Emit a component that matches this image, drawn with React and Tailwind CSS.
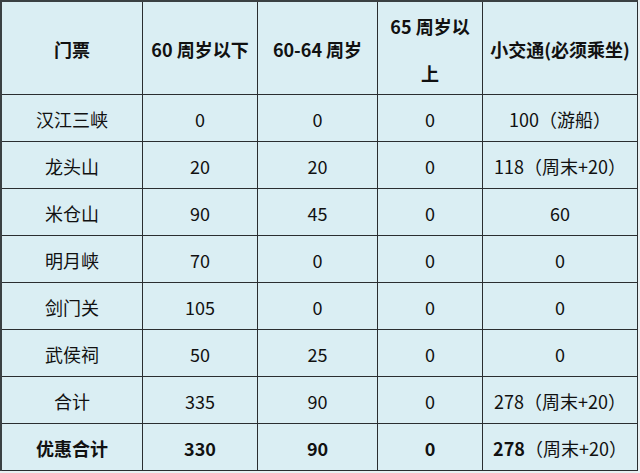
import React from "react";

const font = { fontFamily: '"Noto Sans CJK SC", "Noto Sans", sans-serif' };

const widths = ["w-[141px]", "w-[115px]", "w-[120px]", "w-[105px]", "w-[155px]"];

const rows = [
  ["汉江三峡", "0", "0", "0", "100（游船）"],
  ["龙头山", "20", "20", "0", "118（周末+20）"],
  ["米仓山", "90", "45", "0", "60"],
  ["明月峡", "70", "0", "0", "0"],
  ["剑门关", "105", "0", "0", "0"],
  ["武侯祠", "50", "25", "0", "0"],
  ["合计", "335", "90", "0", "278（周末+20）"],
];

function Cell({ i, children, className = "" }) {
  return (
    <div
      className={`${widths[i]} shrink-0 h-full pt-[3px] flex items-center justify-center text-center border-r border-b border-[#2a2e30] ${className}`}
    >
      {children}
    </div>
  );
}

export default function App() {
  return (
    <div className="w-[640px] h-[473px] bg-[#e9f0f2] text-[#111] text-[18px]" style={font}>
      <div className="w-[638px] border-t-2 border-l-2 border-[#3a4042] bg-[#daeef3]">
        <div className="flex h-[93px] font-bold leading-[47px]">
          <Cell i={0}>门票</Cell>
          <Cell i={1}>60 周岁以下</Cell>
          <Cell i={2}>60-64 周岁</Cell>
          <Cell i={3}>
            <span>
              65 周岁以
              <br />上
            </span>
          </Cell>
          <Cell i={4}>小交通(必须乘坐)</Cell>
        </div>
        {rows.map((r, ri) => (
          <div key={ri} className="flex h-[47px]">
            {r.map((c, ci) => (
              <Cell key={ci} i={ci}>
                {c}
              </Cell>
            ))}
          </div>
        ))}
        <div className="flex h-[47px]">
          <Cell i={0} className="font-bold">优惠合计</Cell>
          <Cell i={1} className="font-bold">330</Cell>
          <Cell i={2} className="font-bold">90</Cell>
          <Cell i={3} className="font-bold">0</Cell>
          <Cell i={4}>
            <span>
              <span className="font-bold">278</span>（周末+20）
            </span>
          </Cell>
        </div>
      </div>
    </div>
  );
}
